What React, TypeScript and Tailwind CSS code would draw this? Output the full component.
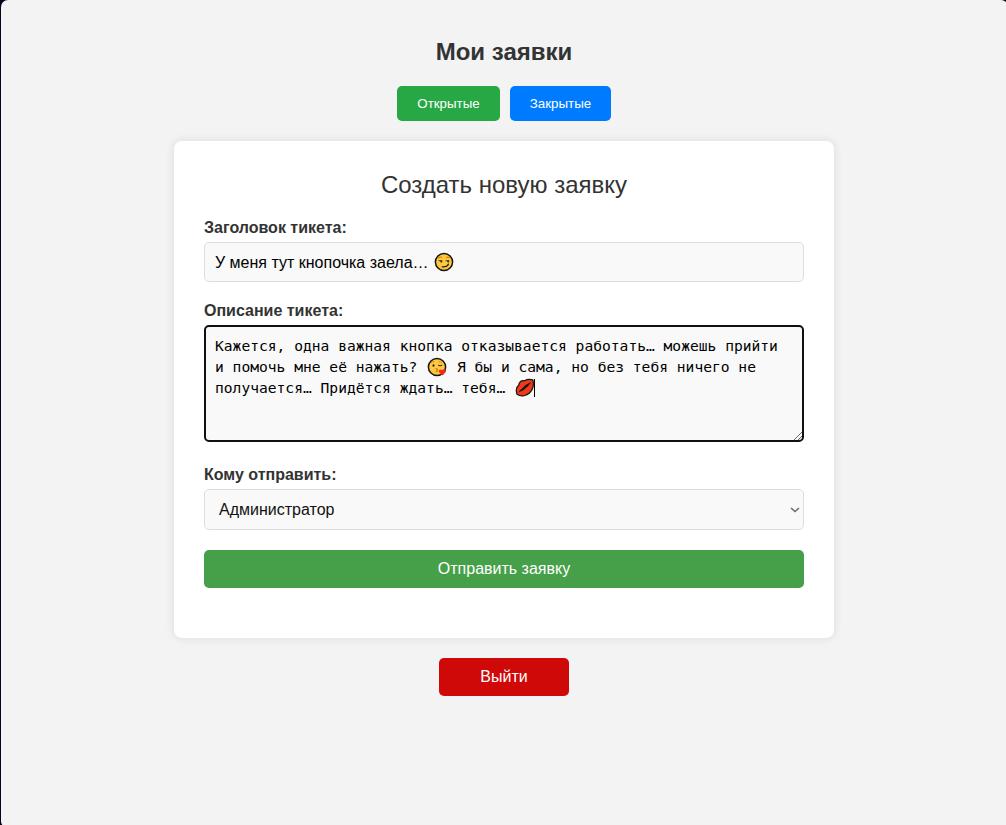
import type { ReactNode } from 'react';

function Label({ children, className }: { children: ReactNode; className: string }) {
  return <div className={`h-[18px] text-base leading-[18px] font-bold text-[#333] ${className}`}>{children}</div>;
}

function SmirkFace() {
  return (
    <svg className="inline-block h-5 w-5" viewBox="0 0 20 20" fill="none" aria-hidden="true">
      <circle cx="10" cy="10" r="8.6" fill="#ffc83d" stroke="#151515" strokeWidth="1.5" />
      <path d="M4 6.3q2-1.9 4-.9M12 5.6q2-1 3.8.5" stroke="#e08a00" strokeWidth="1.3" />
      <path d="M4.6 8.7h3.6M11.6 8.7h3.6" stroke="#242424" strokeWidth="0.8" />
      <circle cx="7.3" cy="9.4" r="1" fill="#242424" />
      <circle cx="14.2" cy="9.4" r="1" fill="#242424" />
      <path d="M8.2 14.8c3.4.3 5.4-.6 6.2-2.6" stroke="#242424" strokeWidth="1.3" strokeLinecap="round" />
    </svg>
  );
}

function KissFace() {
  return (
    <svg className="inline-block h-5 w-5" viewBox="0 0 20 20" fill="none" aria-hidden="true">
      <circle cx="10" cy="10" r="8.6" fill="#ffc83d" stroke="#151515" strokeWidth="1.5" />
      <path d="M4 5.8q1.5-1.6 3.3-1.2M11.5 4.8q1.8-.7 3.4 1" stroke="#e08a00" strokeWidth="1" />
      <ellipse cx="6.5" cy="8.5" rx="1" ry="1.3" fill="#242424" />
      <path d="M11.3 8.3q1.7 1.3 3.6 0" stroke="#242424" strokeWidth="1" strokeLinecap="round" />
      <path d="M9 11.6c2.2-.2 1.9 1.3.6 1.5 1.5.2 1.2 1.8-.6 1.6" stroke="#a86000" strokeWidth="0.9" strokeLinecap="round" />
      <path d="m15.6 18.6-3.5-3.4c-1.1-1.9 1.2-3.6 2.8-2 1.5-1.8 4.4-.5 3.9 1.7Z" fill="#ed2c18" />
    </svg>
  );
}

function Lips() {
  return (
    <svg className="inline-block h-5 w-5" viewBox="0 0 20 20" fill="none" aria-hidden="true">
      <path
        d="M2 16.3C1 13 1.3 9 3.5 7.6 4.3 4.2 6.5 2.2 9.6 2.8c2.3-1.5 5.8-1.5 8.3-.9 1 4.3.2 9.3-3 12.6-3 3.2-8.4 4.8-12.9 1.8Z"
        fill="#f03a17"
        stroke="#151515"
        strokeWidth="1.2"
        strokeLinejoin="round"
      />
      <path d="M3.4 14.4c1.4-1.9 2.6-3.2 4.1-4.1 1.2-2.5 4.6-4.3 8.6-6.4-1.5 2.6-3 4.4-5 5.8-1.7 2.4-4.6 3.5-7.7 4.7Z" fill="#151515" />
    </svg>
  );
}

export default function App() {
  return (
    <div className="h-[825px] w-full overflow-hidden bg-[#05051c] pl-px font-['Liberation_Sans',Arial,sans-serif]">
      <main className="flex h-[828px] w-[1007px] flex-col items-center rounded-[7px] bg-[#f3f3f3] pt-[38px] pr-px">
        <h1 className="h-7 text-2xl leading-7 font-bold text-[#333]">Мои заявки</h1>
        <nav className="mt-5 flex gap-2.5 text-[13.333px] leading-[15px] text-white">
          <button className="h-[35px] w-[103px] rounded-[5px] bg-[#28a745]">Открытые</button>
          <button className="h-[35px] w-[101px] rounded-[5px] bg-[#007bff]">Закрытые</button>
        </nav>

        <section className="mt-5 h-[497px] w-[660px] shrink-0 rounded-lg bg-white px-[30px] pt-[30px] shadow-[0_0_10px_rgba(0,0,0,0.1)]">
          <h2 className="text-center text-2xl leading-7 text-[#333]">Создать новую заявку</h2>

          <Label className="mt-5">Заголовок тикета:</Label>
          <div className="mt-[5px] flex h-10 items-center rounded-[5px] border border-[#ddd] bg-[#f9f9f9] px-2.5 text-base text-black">
            <span className="pt-0.5 whitespace-pre">У меня тут кнопочка заела… </span>
            <span className="ml-px flex"><SmirkFace /></span>
          </div>

          <Label className="mt-5">Описание тикета:</Label>
          <div className="relative mt-[5px] h-[117px] rounded-[5px] border-2 border-[#101010] bg-[#f9f9f9] px-[9px] pt-2 font-['DejaVu_Sans_Mono',monospace] text-[14.62px] leading-[21px] text-black">
            <div className="h-[21px] whitespace-pre">Кажется, одна важная кнопка отказывается работать… можешь прийти</div>
            <div className="flex h-[21px] items-center whitespace-pre">
              <span>и помочь мне её нажать? </span>
              <span className="mr-px ml-px flex"><KissFace /></span>
              <span> Я бы и сама, но без тебя ничего не</span>
            </div>
            <div className="flex h-[21px] items-center whitespace-pre">
              <span>получается… Придётся ждать… тебя… </span>
              <span className="ml-px flex"><Lips /></span>
              <span className="-ml-px h-[18px] w-px bg-black" />
            </div>
            <svg className="absolute right-0 bottom-0 h-2 w-2" viewBox="0 0 8 8" fill="none" aria-hidden="true">
              <path d="M0 8 8 0M4 8l4-4" stroke="#555" strokeWidth="0.9" />
            </svg>
          </div>

          <Label className="mt-6">Кому отправить:</Label>
          <div className="mt-[5px] flex h-[41px] items-center justify-between rounded-[5px] border border-[#ddd] bg-[#f9f9f9] pr-[3px] pl-3.5 text-base text-[#111]">
            <span>Администратор</span>
            <svg className="h-[10px] w-[10px]" viewBox="0 0 10 10" fill="none" aria-hidden="true">
              <path d="m1 3 4 3.5L9 3" stroke="#6b6b6b" strokeWidth="1.5" />
            </svg>
          </div>

          <button className="mt-5 h-[38px] w-full rounded-[5px] bg-[#45a049] text-base text-white">Отправить заявку</button>
        </section>

        <button className="mt-5 h-[38px] w-[130px] shrink-0 rounded-[5px] bg-[#cf0808] text-base text-white">Выйти</button>
      </main>
    </div>
  );
}
